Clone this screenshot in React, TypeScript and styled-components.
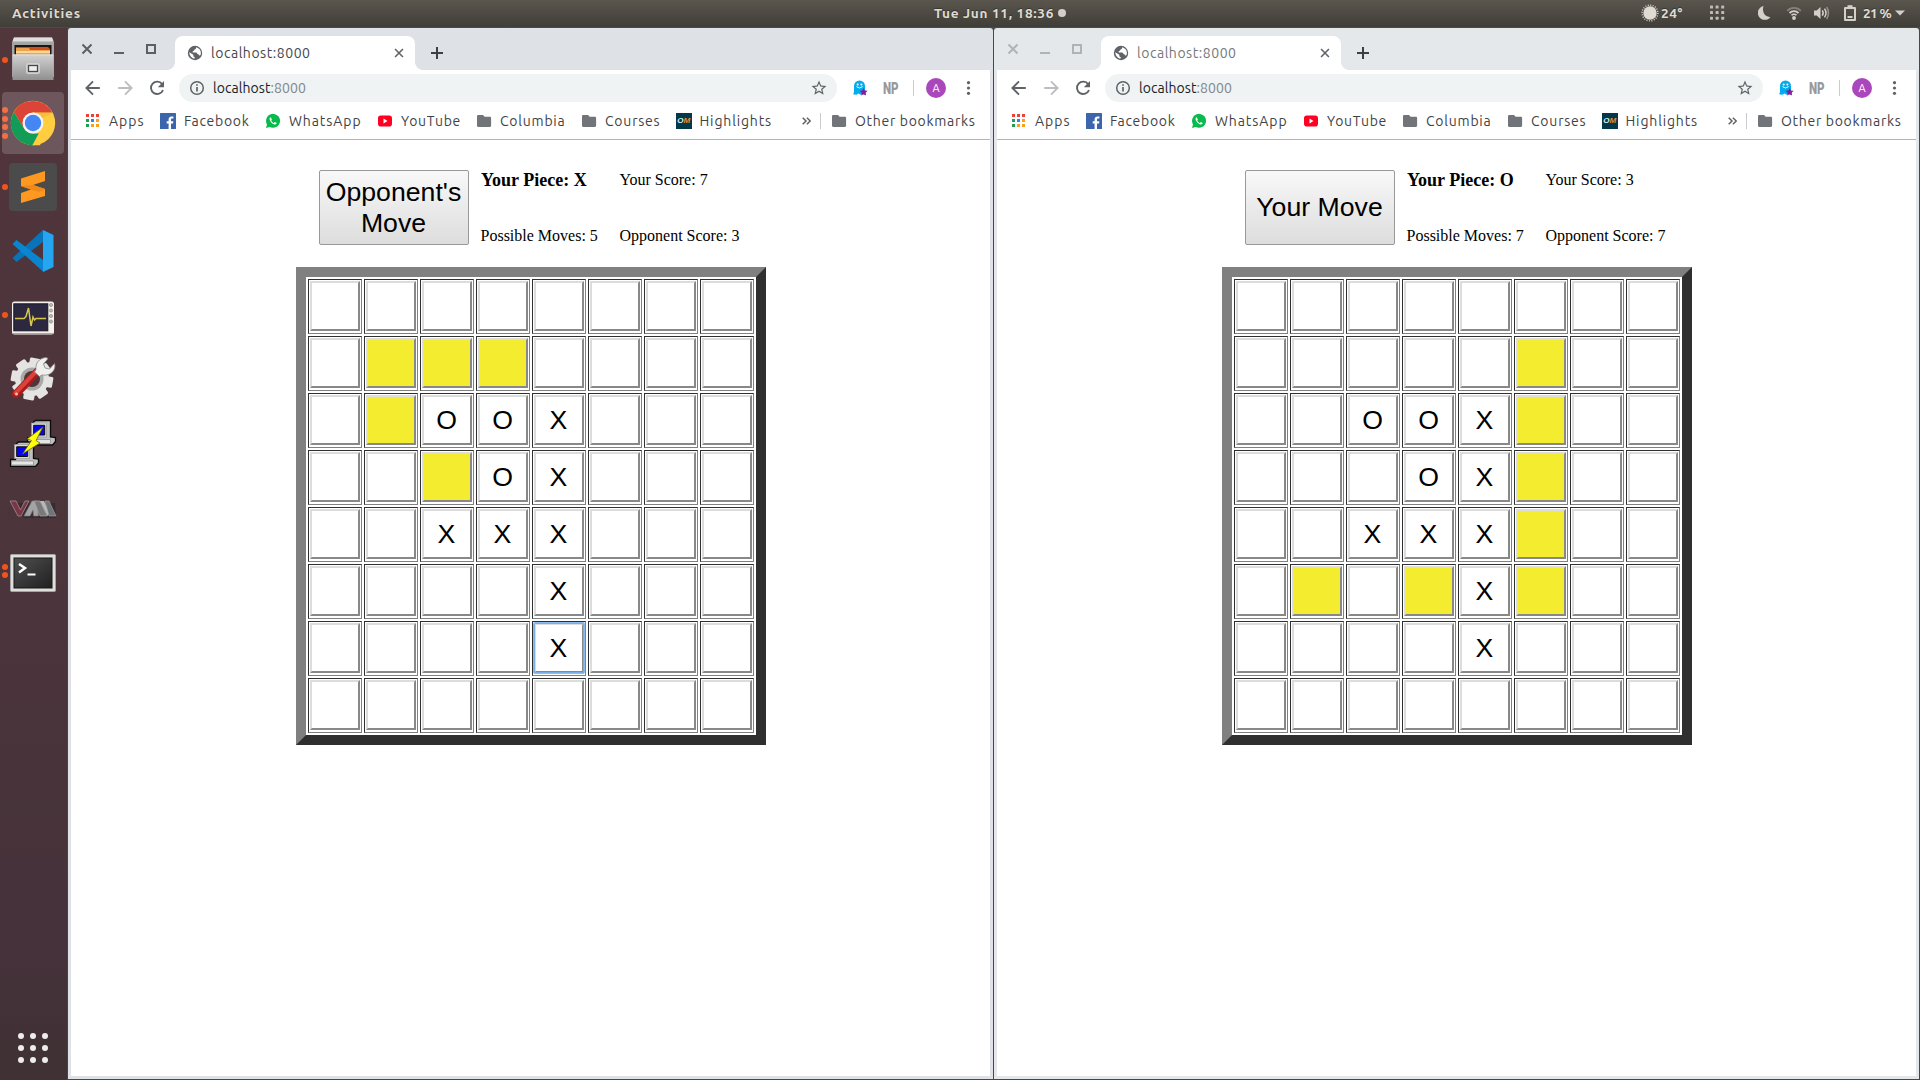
import React, { useLayoutEffect, useRef, useState } from "react";
import styled, { createGlobalStyle } from "styled-components";

const UI = `Ubuntu, "Noto Sans", "Open Sans", sans-serif`;

const GlobalStyle = createGlobalStyle`
  * { box-sizing: border-box; }
  html, body { margin: 0; padding: 0; }
  body { background: #45454a; overflow: hidden; }
  svg { display: block; flex: none; }
`;

/* ---------- fitted text: spaces letters so a label fills its slot ---------- */
const FitBox = styled.span`
  display: inline-block;
  white-space: pre;
`;

function Fit({ w, children }: { w: number; children: React.ReactNode }) {
  const ref = useRef<HTMLSpanElement>(null);
  const [spacing, setSpacing] = useState(0);
  useLayoutEffect(() => {
    const el = ref.current;
    if (!el) return;
    const natural = el.getBoundingClientRect().width;
    setSpacing((w - natural) / (el.textContent || " ").length);
  }, [w]);
  return (
    <FitBox ref={ref} style={{ letterSpacing: spacing }}>
      {children}
    </FitBox>
  );
}

/* ---------- desktop shell ---------- */
const Desktop = styled.div`
  width: 1920px;
  height: 1080px;
  display: flex;
  flex-direction: column;
  overflow: hidden;
  font-family: ${UI};
`;

const TopBar = styled.header`
  height: 28px;
  flex: none;
  display: grid;
  grid-template-columns: 922px auto 1fr;
  align-items: center;
  padding: 0 15px 2px 12px;
  background: linear-gradient(#5a564e, #403e38);
  border-bottom: 1px solid #4b4b4b;
  color: #dfdbd2;
  font-size: 13.6px;
  font-weight: 600;
  line-height: 20px;
  text-shadow: 0 -1px 1px rgba(0, 0, 0, 0.35);
`;

const Clock = styled.div`
  display: flex;
  align-items: center;
  gap: 4px;
`;

const Dot = styled.span`
  width: 8px;
  height: 8px;
  border-radius: 50%;
  background: #d2cfc9;
`;

const Tray = styled.div`
  display: flex;
  justify-content: flex-end;
  align-items: center;
`;

const TrayItem = styled.span<{ $gap: number }>`
  margin-left: ${(p) => p.$gap}px;
  display: flex;
  flex: none;
`;

const Main = styled.div`
  flex: 1;
  display: flex;
  min-height: 0;
`;

const Dock = styled.nav`
  width: 68px;
  flex: none;
  display: flex;
  flex-direction: column;
  background: linear-gradient(#51363b, #4b343b 58%, #45323a 88%, #3f3134);
  border-right: 1px solid #46444a;
`;

const DockSlot = styled.div`
  height: 64px;
  display: flex;
  align-items: center;
  &:first-child { height: 63px; }
`;

const Dots = styled.div`
  width: 8px;
  padding-left: 2px;
  flex: none;
  display: flex;
  flex-direction: column;
  gap: 2.5px;
`;

const RunDot = styled.span`
  width: 6px;
  height: 6px;
  border-radius: 50%;
  background: #f0541e;
`;

const Tile = styled.div<{ $active?: boolean; $drop?: number }>`
  width: 62px;
  height: 62px;
  margin-left: -6px;
  padding-top: ${(p) => Math.max(0, (p.$drop || 0) * 2)}px;
  padding-bottom: ${(p) => Math.max(0, -(p.$drop || 0) * 2)}px;
  border-radius: 4px;
  display: grid;
  place-items: center;
  background: ${(p) => (p.$active ? "rgba(255,255,255,0.17)" : "transparent")};
`;

const GridButton = styled.div`
  margin: auto 0 17px 18px;
  display: grid;
  grid-template-columns: repeat(3, 6px);
  gap: 6px;
  span { width: 6px; height: 6px; border-radius: 50%; background: #efedec; }
`;

/* ---------- browser window ---------- */
const Windows = styled.div`
  flex: 1;
  display: grid;
  grid-template-columns: 925px 925px;
  column-gap: 1px;
  padding-bottom: 1px;
  background: #45494d;
`;

const Frame = styled.section<{ $focused: boolean }>`
  display: flex;
  flex-direction: column;
  padding: 0 3px 3px;
  border-radius: 3px 3px 0 0;
  background: ${(p) => (p.$focused ? "#dee1e6" : "#e4e8eb")};
`;

const Strip = styled.div`
  height: 42px;
  display: flex;
  align-items: flex-end;
`;

const Controls = styled.div<{ $focused: boolean }>`
  width: 104px;
  height: 42px;
  display: flex;
  padding: 13px 0 0 8px;
  gap: 16px;
  color: ${(p) => (p.$focused ? "#5c6064" : "#b0b3b5")};
`;

const Tab = styled.div<{ $focused: boolean }>`
  position: relative;
  width: 240px;
  height: 34px;
  border-radius: 8px 8px 0 0;
  background: #fff;
  display: flex;
  align-items: center;
  padding: 0 9px 0 11px;
  font-size: 14px;
  line-height: 20px;
  color: ${(p) => (p.$focused ? "#44484c" : "#74787c")};
  &::before, &::after {
    content: "";
    position: absolute;
    bottom: 0;
    width: 8px;
    height: 8px;
  }
  &::before { left: -8px; background: radial-gradient(circle at 0 0, transparent 7.6px, #fff 8.2px); }
  &::after { right: -8px; background: radial-gradient(circle at 100% 0, transparent 7.6px, #fff 8.2px); }
`;

const TabTitle = styled.span`
  margin-left: 7px;
  flex: 1;
`;

const NewTab = styled.div`
  width: 44px;
  height: 34px;
  display: grid;
  place-items: center;
`;

const Toolbar = styled.div`
  height: 36px;
  background: #fff;
  display: flex;
  align-items: center;
  padding-left: 12px;
`;

const NavIcons = styled.div`
  width: 96px;
  display: flex;
  gap: 12px;
`;

const Omnibox = styled.div`
  width: 658px;
  height: 28px;
  border-radius: 14px;
  background: #eff3f4;
  display: flex;
  align-items: center;
  padding: 0 9px 0 9px;
  font-size: 14px;
  line-height: 20px;
  color: #202124;
`;

const Url = styled.span`
  flex: 1;
  margin-left: 7px;
  em { font-style: normal; color: #80868b; }
`;

const Extensions = styled.div`
  display: flex;
  align-items: center;
  margin-left: 15px;
`;

const NP = styled.span`
  width: 30px;
  margin-left: 15px;
  display: flex;
  justify-content: flex-start;
  font: 700 17px/20px "Roboto", sans-serif;
  color: #97999b;
  b { transform: scaleX(0.68); transform-origin: 0 50%; }
`;

const Divider = styled.span`
  width: 1px;
  height: 16px;
  background: #c9cbcd;
`;

const Avatar = styled.span`
  width: 20px;
  height: 20px;
  margin: 0 12px 0 12px;
  border-radius: 50%;
  background: #ab47bc;
  color: #fff;
  display: grid;
  place-items: center;
  font-size: 11px;
  line-height: 20px;
`;

const Bookmarks = styled.div`
  height: 34px;
  background: #fff;
  border-bottom: 1px solid #b3b5b8;
  display: flex;
  align-items: center;
  padding: 0 0 4px 14px;
  font-size: 14px;
  line-height: 20px;
  color: #3f4347;
`;

const Bookmark = styled.div<{ $w: number }>`
  width: ${(p) => p.$w}px;
  flex: none;
  display: flex;
  align-items: center;
  gap: 8px;
`;

const More = styled.div`
  margin-left: 30px;
  width: 18px;
`;

const FolderPad = styled.span`
  padding-left: 10px;
`;

/* ---------- page ---------- */
const Page = styled.main`
  flex: 1;
  background: #fff;
  padding: 30px 0 0 225px;
  color: #000;
  font-family: "Liberation Serif", "Times New Roman", serif;
`;

const Status = styled.div`
  display: grid;
  grid-template-columns: 150px 139px auto;
  grid-template-rows: 56px 19px;
  padding-left: 23px;
  height: 97px;
  align-items: start;
  font-size: 16px;
  line-height: 20px;
`;

const MoveButton = styled.button`
  grid-row: 1 / 3;
  width: 150px;
  height: 75px;
  margin: 0;
  padding: 0 3px 0 2px;
  border: 1px solid #999;
  border-radius: 2px;
  background: linear-gradient(#f8f8f8, #ddd);
  color: #000;
  font: 26.67px/31px "Liberation Sans", Arial, sans-serif;
`;

const Piece = styled.strong`
  margin-left: 12px;
  font-size: 18px;
`;

const Info = styled.span`
  margin-left: 11.5px;
  white-space: nowrap;
`;

const Board = styled.div`
  width: 470px;
  height: 478px;
  border: 10px solid;
  border-color: #808080 #2f2f2f #2f2f2f #808080;
  padding: 2px;
  display: grid;
  grid-template-columns: repeat(8, 54px);
  grid-auto-rows: 55px;
  gap: 2px;
`;

const Cell = styled.div`
  border: 1px solid;
  border-color: #2f2f2f #808080 #808080 #2f2f2f;
  padding: 1px;
`;

const Square = styled.button<{ $open: boolean; $focus: boolean }>`
  display: block;
  width: 50px;
  height: 50px;
  margin: 0;
  padding: 0 1px 0 0;
  border: 2px solid;
  border-color: #dcdcdc #888 #888 #dcdcdc;
  background: ${(p) => (p.$open ? "#f4ec2e" : "#fff")};
  color: #000;
  font: 26.67px/31px "Liberation Sans", Arial, sans-serif;
  box-shadow: ${(p) => (p.$focus ? "0 0 0 1px #8bbcef" : "none")};
  outline: ${(p) => (p.$focus ? "1px solid #79aee6" : "none")};
  outline-offset: -1px;
  border-radius: ${(p) => (p.$focus ? 1 : 0)}px;
`;

/* ---------- chrome icons ---------- */
const G = "#5f6368";

const Globe = () => (
  <svg width="18" height="18" viewBox="0 0 18 18">
    <circle cx="9" cy="9" r="7.200" fill={G} />
    <path d="M10 3.300c.3 1.200-.3 2-1.500 2.200-.4 1-.9 1.500-1.900 1.700l.2 1.300h3.300c.8.1 1.200.6 1.200 1.500l1.400.4c.7.4 1 .9.900 1.600 1-1 1.400-2.300 1.300-3.600-.3-2.500-2.100-4.500-4.900-5.100z" fill="#fff" />
    <path d="M3.300 8.200c0 3.300 2.200 6 5.400 6.400v-1.500c-.9 0-1.400-.6-1.400-1.500v-.8z" fill="#fff" />
  </svg>
);

const Close = ({ s = 16, c = "currentColor", w = 2 }: { s?: number; c?: string; w?: number }) => (
  <svg width={s} height={s} viewBox="0 0 16 16" stroke={c} strokeWidth={w}>
    <path d="M3.5 3.500l9 9M12.500 3.500l-9 9" />
  </svg>
);

const Minimize = () => (
  <svg width="16" height="16" stroke="currentColor" strokeWidth="2">
    <path d="M3 12h10" />
  </svg>
);

const Maximize = () => (
  <svg width="16" height="16" fill="none" stroke="currentColor" strokeWidth="2">
    <path d="M4 4h8v8H4z" />
  </svg>
);

const Arrow = ({ forward = false }: { forward?: boolean }) => (
  <svg width="20" height="20" fill="none" stroke={forward ? "#bbbdc0" : G} strokeWidth="1.900">
    <path d={forward ? "M3.200 10H16M10 3.400l6.600 6.600-6.600 6.600" : "M16.800 10H4M10 3.400L3.400 10l6.600 6.600"} />
  </svg>
);

const Reload = () => (
  <svg width="20" height="20" fill="none" stroke={G} strokeWidth="1.900">
    <path d="M15.200 6.200A6.200 6.200 0 1 0 16 12" />
    <path d="M17 3v6.200h-6.200z" fill={G} stroke="none" />
  </svg>
);

const InfoIcon = () => (
  <svg width="18" height="18" fill="none" stroke={G} strokeWidth="1.500">
    <circle cx="9" cy="9" r="6.300" />
    <path d="M9 8v4.500M9 5.200v1.600" strokeWidth="1.700" />
  </svg>
);

const Star = () => (
  <svg width="18" height="18" viewBox="0 0 24 24" fill={G}>
    <path d="M22 9.240l-7.190-.620L12 2 9.190 8.630 2 9.240l5.460 4.730L5.820 21 12 17.270 18.180 21l-1.630-7.030L22 9.240zM12 15.400l-3.760 2.270 1-4.280-3.320-2.880 4.380-.380L12 6.100l1.710 4.040 4.380.380-3.320 2.880 1 4.280L12 15.400z" />
  </svg>
);

const Ghost = () => (
  <svg width="16" height="16">
    <path d="M2 6a5.500 5.500 0 0 1 11 0v6.500l1 1.800-2.500.2-1.300-1-1.800 1.300-2-1.200-2 1.200L1 14.200l1-2z" fill="#00aef0" />
    <circle cx="5.700" cy="4.500" r="1" fill="#fff" />
    <circle cx="9.400" cy="4.500" r="1" fill="#fff" />
    <path d="M4.500 6.600q3 2.800 6 0" stroke="#fff" fill="none" strokeWidth="1" />
    <path d="M11.600 8l1.200 2.400 2.800.4-2 1.900.5 2.800-2.500-1.300-2.500 1.300.5-2.800-2-1.900 2.800-.4z" fill="#8e1a93" />
  </svg>
);

const Kebab = () => (
  <svg width="20" height="20" fill={G}>
    <circle cx="10.500" cy="4.700" r="1.600" />
    <circle cx="10.500" cy="10" r="1.600" />
    <circle cx="10.500" cy="15.300" r="1.600" />
  </svg>
);

const AppsIcon = () => {
  const colors = ["#ee4035", "#ee4035", "#ee4035", "#1f9d57", "#2684fc", "#f9a11b", "#1f9d57", "#f9a11b", "#f9a11b"];
  return (
    <svg width="16" height="16">
      {colors.map((c, i) => (
        <rect key={i} x={1 + (i % 3) * 5} y={1 + Math.floor(i / 3) * 5} width="3" height="3" fill={c} />
      ))}
    </svg>
  );
};

const FacebookIcon = () => (
  <svg width="16" height="16">
    <rect width="16" height="16" rx=".5" fill="#3b66ad" />
    <path d="M8.600 16v-5.500H6.700V8.300h1.900V6.600C8.600 4.600 9.800 3.500 11.700 3.500l1.700.1v2h-1.200c-1 0-1.200.5-1.200 1.200v1.500h2.300l-.3 2.200h-2V16z" fill="#fff" />
  </svg>
);

const WhatsAppIcon = () => (
  <svg width="16" height="16">
    <path d="M1 15l1-3.600A7 7 0 1 1 4.700 14z" fill="#07bc4c" />
    <path d="M5.700 4.300c-.9.3-1.400 1.300-1 2.500.8 2.300 2.600 4 4.600 4.600 1.300.3 2.300-.3 2.400-1.300l-1.900-1.100-.9 1c-1.200-.5-2.200-1.500-2.700-2.600l.7-.9z" fill="#fff" />
  </svg>
);

const YouTubeIcon = () => (
  <svg width="16" height="16">
    <rect x="1" y="2.500" width="14" height="11" rx="2.800" fill="#ff0022" />
    <path d="M6.500 5.500v5l4-2.500z" fill="#fff" />
  </svg>
);

const Folder = () => (
  <svg width="16" height="16" fill="#717579">
    <path d="M2.500 2h4.600l1.500 1.700h5.200c.8 0 1.300.5 1.300 1.200v7.900c0 .7-.5 1.200-1.300 1.200H2.300c-.8 0-1.300-.5-1.300-1.200V3.300C1 2.500 1.600 2 2.500 2z" />
  </svg>
);

const OMBox = styled.span`
  width: 16px;
  height: 16px;
  background: #03384a;
  color: #d5f3f5;
  font: italic 700 8px/16px "Liberation Sans", sans-serif;
  text-align: center;
  i { color: #f08a24; }
`;

const OM = () => (
  <OMBox>
    O<i>M</i>
  </OMBox>
);

/* ---------- dock icons ---------- */
const Files = () => (
  <svg width="46" height="46">
    <defs>
      <linearGradient id="steel" x1="0" y1="0" x2="0" y2="1">
        <stop offset="0" stopColor="#d2d2d2" />
        <stop offset="1" stopColor="#909090" />
      </linearGradient>
    </defs>
    <path d="M4 1.500h38l2 5V41H2V6.500z" fill="#a5a5a5" />
    <path d="M4 1.500h38l1.500 4h-41z" fill="#dedede" />
    <rect x="4.500" y="9" width="37" height="11" fill="#1c1715" />
    <path d="M6 11h32l2 2v6H6z" fill="#cd4e20" />
    <path d="M6 12h13l1 2h20v5H6z" fill="#efa44c" />
    <path d="M6 16h34" stroke="#ffe9bd" strokeWidth="1.500" />
    <path d="M2.500 18.500h41V44h-41z" fill="url(#steel)" />
    <path d="M3 19h40" stroke="#e0e0e0" />
    <rect x="16" y="27" width="14" height="11" rx="2.500" fill="#d1d1d1" />
    <rect x="18.500" y="29.500" width="9" height="6" fill="#eee" stroke="#484848" strokeWidth="1.300" />
  </svg>
);

const Chrome = () => (
  <svg width="46" height="46" viewBox="0 0 46 46">
    <circle cx="23" cy="23" r="22.200" fill="#ffcd40" />
    <path d="M3.800 11.900A22.200 22.200 0 0 1 42.300 12.500H23L13.800 28.200z" fill="#db4437" />
    <path d="M3.800 11.900L13.900 28.300C16 32 20 33.600 23 33.500h9L22.300 45.200A22.200 22.200 0 0 1 3.800 11.900z" fill="#119d58" />
    <path d="M33 28.300L22.500 45.200 29.500 32z" fill="#ffcd40" />
    <path d="M32 28.300L22.500 45.200H30L36 30z" fill="#ffcd40" />
    <path d="M23 12.700h19.400l-9 5z" fill="#e0a92c" opacity=".35" />
    <circle cx="23" cy="23" r="10.500" fill="#f4f4f4" />
    <circle cx="23" cy="23" r="8.200" fill="#4486f4" />
  </svg>
);

const Sublime = () => (
  <svg width="48" height="48">
    <rect width="48" height="48" rx="4" fill="#4b4b4b" />
    <path d="M12 15.500L36 8v10L24 22l12 4v7L12 40V30l10-3.500-10-3.500z" fill="#ff9820" />
    <path d="M12 23l10 3.500 8 2.500 6-2.500V26l-12-4z" fill="#f08a16" />
  </svg>
);

const VSCode = () => (
  <svg width="42" height="42">
    <path d="M.5 28l4 4L31 12V0z" fill="#0a74ba" />
    <path d="M.5 14l4-4L31 30v11.500z" fill="#0a86d1" />
    <path d="M31 0l10.500 5v32L31 42z" fill="#26a5f0" />
  </svg>
);

const Monitor = () => (
  <svg width="44" height="34">
    <rect x="1" y=".5" width="42" height="33" rx="2.500" fill="#f4f2eb" />
    <path d="M2 32.500h40" stroke="#aaa89f" />
    <rect x="2.800" y="2.800" width="34" height="27" fill="#2b2840" stroke="#17152a" />
    <path d="M4 17.500h9l2-2 2.500-8.500L20 25l2-9 1.500 3 1.500-1.500h10" fill="none" stroke="#d6c64a" strokeWidth="1.500" />
    {[4, 9.500, 15, 20.500].map((y) => (
      <circle key={y} cx="40" cy={y} r="1.600" fill="#bbb8b0" stroke="#8b8982" strokeWidth=".7" />
    ))}
  </svg>
);

const Tools = () => (
  <svg width="48" height="48" viewBox="0 0 48 48">
    <g fill="#e4e4e2">
      {[0, 45, 90, 135].map((a) => (
        <rect key={a} x="17.500" y="4" width="11" height="42" rx="1.500" transform={`rotate(${a + 10} 23 25)`} />
      ))}
      <circle cx="23" cy="25" r="17" />
    </g>
    <circle cx="23" cy="25" r="11.500" fill="#aaa9a7" />
    <circle cx="23" cy="25" r="8" fill="#4d363c" />
    <path d="M7 40L29 17" stroke="#a91c1b" strokeWidth="8" strokeLinecap="round" />
    <path d="M6.500 39L28 16.500" stroke="#dc423c" strokeWidth="4" strokeLinecap="round" />
    <path d="M27 15.500c-.8-6 3-11.500 10-12l2 1-4.500 5.500 1.500 4 4.500 1 5-5.500c2 6-3.500 13-12.500 11.500l-2.500 1.500-5-4.500z" fill="#efefed" stroke="#888" strokeWidth=".8" />
    <circle cx="7.500" cy="40" r="1.500" fill="#f4bbb6" />
  </svg>
);

const Computer = ({ x, y }: { x: number; y: number }) => (
  <g transform={`translate(${x} ${y})`} stroke="#0b0b0b" strokeWidth="1.300">
    <path d="M1 18h5V3l3-2.500h15V17l5 .5v4L26 25H1z" fill="#bfbfbf" />
    <path d="M5 3h15v14H5z" fill="#dadada" stroke="#999" strokeWidth=".7" />
    <path d="M7.200 5.300h11v9.700h-11z" fill="#0606ee" strokeWidth="1" />
    <path d="M2 19.500h22v4H2z" fill="#e5e5e5" stroke="#888" strokeWidth=".7" />
  </g>
);

const Putty = () => (
  <svg width="48" height="48">
    <Computer x={17.500} y={1} />
    <Computer x={0.500} y={22.500} />
    <path d="M34 8L18 20l4.500 1.500L13.500 35 31 24l-4-2.500z" fill="#ffff05" stroke="#66620a" strokeWidth=".8" />
  </svg>
);

const VM = () => (
  <svg width="48" height="20">
    <path d="M4 4h42l1 15H15z" fill="#2a242899" />
    <path d="M1 2h6l4.500 9L16 2h4l-8 15h-3z" fill="#7c3544" stroke="#92878a" strokeWidth=".9" />
    <path d="M15 17l8-15h5l1.500 15h-5l-.5-6-3 6z" fill="#a4a4a6" stroke="#777" strokeWidth=".7" />
    <path d="M25 2h6l7 15h-7z" fill="#77797b" stroke="#aaa" strokeWidth=".7" />
    <path d="M31 2h4l6 12-2.500 3z" fill="#b8b8b9" />
    <path d="M36 2h4l7 15h-7z" fill="#707477" stroke="#aaa" strokeWidth=".6" />
  </svg>
);

const Terminal = () => (
  <svg width="46" height="38">
    <defs>
      <linearGradient id="term" x1="0" y1="0" x2="1" y2="1">
        <stop offset="0" stopColor="#505050" />
        <stop offset="1" stopColor="#202020" />
      </linearGradient>
    </defs>
    <rect x=".5" y=".5" width="45" height="37" rx="1" fill="#dededc" stroke="#aaa" strokeWidth=".8" />
    <rect x="4" y="4" width="38" height="30" fill="url(#term)" stroke="#161616" />
    <path d="M9 10l6 4-6 4.500" fill="none" stroke="#fff" strokeWidth="2.500" />
    <path d="M17.500 20.500h8" stroke="#fff" strokeWidth="2" />
  </svg>
);

/* ---------- tray icons ---------- */
const T = "#d3d0ca";

const Sun = () => (
  <svg width="18" height="18">
    <circle cx="9" cy="9" r="6.700" fill="#dfdbd2" />
    <circle cx="9" cy="9" r="7.900" fill="none" stroke="#dfdbd2" strokeWidth="1.400" strokeDasharray="1 1.480" />
  </svg>
);

const TrayGrid = () => (
  <svg width="15" height="15" fill="#bebbb5">
    {Array.from({ length: 9 }, (_, i) => (
      <rect key={i} x={(i % 3) * 5.600} y={0.500 + Math.floor(i / 3) * 5.600} width="3" height="3" rx=".6" />
    ))}
  </svg>
);

const Moon = () => (
  <svg width="13" height="14">
    <path d="M5.500 0A7 7 0 1 0 12.500 11C7.500 11.500 3.500 6.500 5.500 0z" fill={T} />
  </svg>
);

const Wifi = () => (
  <svg width="16" height="14" fill="none" stroke={T}>
    <path d="M1.200 4.800a9.500 9.500 0 0 1 13.600 0" stroke="#85827b" strokeWidth="1.800" />
    <path d="M3.500 7a6.500 6.500 0 0 1 9 0" strokeWidth="1.800" />
    <path d="M5.500 9.300a3.500 3.500 0 0 1 5 0" strokeWidth="1.600" />
    <circle cx="8" cy="12" r="1.900" fill={T} stroke="none" />
  </svg>
);

const Volume = () => (
  <svg width="16" height="14" fill="none" stroke={T} strokeWidth="1.500">
    <path d="M0 4.500h2.700L6.500 1v12L2.700 9.500H0z" fill={T} stroke="none" />
    <path d="M8.300 4.300q1.700 2.700 0 5.400M10.500 2.600q3 4.400 0 8.800" />
    <path d="M12.700 1q3.500 6 0 12" stroke="#918e87" />
  </svg>
);

const Battery = () => (
  <svg width="12" height="16" fill="none" stroke={T}>
    <path d="M1 3h10v12H1z" strokeWidth="2" strokeLinejoin="round" />
    <path d="M3.500 1.200h5" strokeWidth="2" />
    <path d="M3.500 12h5" strokeWidth="2" />
  </svg>
);

/* ---------- data ---------- */
const bookmarks: { label: string; slot: number; text: number; icon: React.ReactNode }[] = [
  { label: "Apps", slot: 75, text: 35.5, icon: <AppsIcon /> },
  { label: "Facebook", slot: 105, text: 65.5, icon: <FacebookIcon /> },
  { label: "WhatsApp", slot: 112, text: 72.5, icon: <WhatsAppIcon /> },
  { label: "YouTube", slot: 99, text: 60, icon: <YouTubeIcon /> },
  { label: "Columbia", slot: 105, text: 65.5, icon: <Folder /> },
  { label: "Courses", slot: 95, text: 55.5, icon: <Folder /> },
  { label: "Highlights", slot: 96, text: 72.5, icon: <OM /> },
];

const dock: { running: number; active?: boolean; drop?: number; icon: React.ReactNode }[] = [
  { running: 1, drop: -0.5, icon: <Files /> },
  { running: 4, active: true, icon: <Chrome /> },
  { running: 1, icon: <Sublime /> },
  { running: 0, icon: <VSCode /> },
  { running: 1, drop: 3, icon: <Monitor /> },
  { running: 0, drop: -1, icon: <Tools /> },
  { running: 0, icon: <Putty /> },
  { running: 0, drop: 2, icon: <VM /> },
  { running: 2, drop: 2, icon: <Terminal /> },
];

// "*" marks a legal move, "#" a focused X
const leftBoard = ["........", ".***....", ".*OOX...", "..*OX...", "..XXX...", "....X...", "....#...", "........"];
const rightBoard = ["........", ".....*..", "..OOX*..", "...OX*..", "..XXX*..", ".*.*X*..", "....X...", "........"];

type GameProps = {
  focused: boolean;
  move: string;
  piece: string;
  moves: number;
  mine: number;
  theirs: number;
  board: string[];
};

function Browser({ focused, move, piece, moves, mine, theirs, board }: GameProps) {
  return (
    <Frame $focused={focused}>
      <Strip>
        <Controls $focused={focused}>
          <Close />
          <Minimize />
          <Maximize />
        </Controls>
        <Tab $focused={focused}>
          <Globe />
          <TabTitle>
            <Fit w={99.500}>localhost:8000</Fit>
          </TabTitle>
          <Close s={14} c={G} w={1.800} />
        </Tab>
        <NewTab>
          <svg width="14" height="14" stroke="#3c4043" strokeWidth="2">
            <path d="M1 7h12M7 1v12" />
          </svg>
        </NewTab>
      </Strip>
      <Toolbar>
        <NavIcons>
          <Arrow />
          <Arrow forward />
          <Reload />
        </NavIcons>
        <Omnibox>
          <InfoIcon />
          <Url>
            <Fit w={93}>
              localhost<em>:8000</em>
            </Fit>
          </Url>
          <Star />
        </Omnibox>
        <Extensions>
          <Ghost />
          <NP>
            <b>NP</b>
          </NP>
          <Divider />
          <Avatar>A</Avatar>
          <Kebab />
        </Extensions>
      </Toolbar>
      <Bookmarks>
        {bookmarks.map((b) => (
          <Bookmark key={b.label} $w={b.slot}>
            {b.icon}
            <Fit w={b.text}>{b.label}</Fit>
          </Bookmark>
        ))}
        <More>
          <svg width="9" height="8" fill="none" stroke={G} strokeWidth="1.500">
            <path d="M.7 .7L4 4 .7 7.300M4.900 .7L8.200 4 4.900 7.300" />
          </svg>
        </More>
        <Divider />
        <Bookmark $w={150}>
          <FolderPad>
            <Folder />
          </FolderPad>
          <Fit w={120.500}>Other bookmarks</Fit>
        </Bookmark>
      </Bookmarks>
      <Page>
        <Status>
          <MoveButton>{move}</MoveButton>
          <Piece>Your Piece: {piece}</Piece>
          <Info>Your Score: {mine}</Info>
          <Info>Possible Moves: {moves}</Info>
          <Info>Opponent Score: {theirs}</Info>
        </Status>
        <Board>
          {board
            .join("")
            .split("")
            .map((c, i) => (
              <Cell key={i}>
                <Square $open={c === "*"} $focus={c === "#"}>
                  {c === "#" ? "X" : c === "." || c === "*" ? "" : c}
                </Square>
              </Cell>
            ))}
        </Board>
      </Page>
    </Frame>
  );
}

export default function App() {
  return (
    <Desktop>
      <GlobalStyle />
      <TopBar>
        <div>
          <Fit w={69}>Activities</Fit>
        </div>
        <Clock>
          <Fit w={120}>Tue Jun 11, 18:36</Fit>
          <Dot />
        </Clock>
        <Tray>
          <TrayItem $gap={0}><Sun /></TrayItem>
          <TrayItem $gap={2}><Fit w={22}>24°</Fit></TrayItem>
          <TrayItem $gap={27}><TrayGrid /></TrayItem>
          <TrayItem $gap={33}><Moon /></TrayItem>
          <TrayItem $gap={15}><Wifi /></TrayItem>
          <TrayItem $gap={12}><Volume /></TrayItem>
          <TrayItem $gap={14}><Battery /></TrayItem>
          <TrayItem $gap={7}><Fit w={28}>21 %</Fit></TrayItem>
          <TrayItem $gap={4}>
            <svg width="10" height="6" fill={T}><path d="M0 .5h10L5 5.500z" /></svg>
          </TrayItem>
        </Tray>
      </TopBar>
      <Main>
        <Dock>
          {dock.map((d, i) => (
            <DockSlot key={i}>
              <Dots>
                {Array.from({ length: d.running }, (_, k) => (
                  <RunDot key={k} />
                ))}
              </Dots>
              <Tile $active={d.active} $drop={d.drop}>{d.icon}</Tile>
            </DockSlot>
          ))}
          <GridButton>
            {Array.from({ length: 9 }, (_, i) => (
              <span key={i} />
            ))}
          </GridButton>
        </Dock>
        <Windows>
          <Browser focused move="Opponent's Move" piece="X" moves={5} mine={7} theirs={3} board={leftBoard} />
          <Browser focused={false} move="Your Move" piece="O" moves={7} mine={3} theirs={7} board={rightBoard} />
        </Windows>
      </Main>
    </Desktop>
  );
}
